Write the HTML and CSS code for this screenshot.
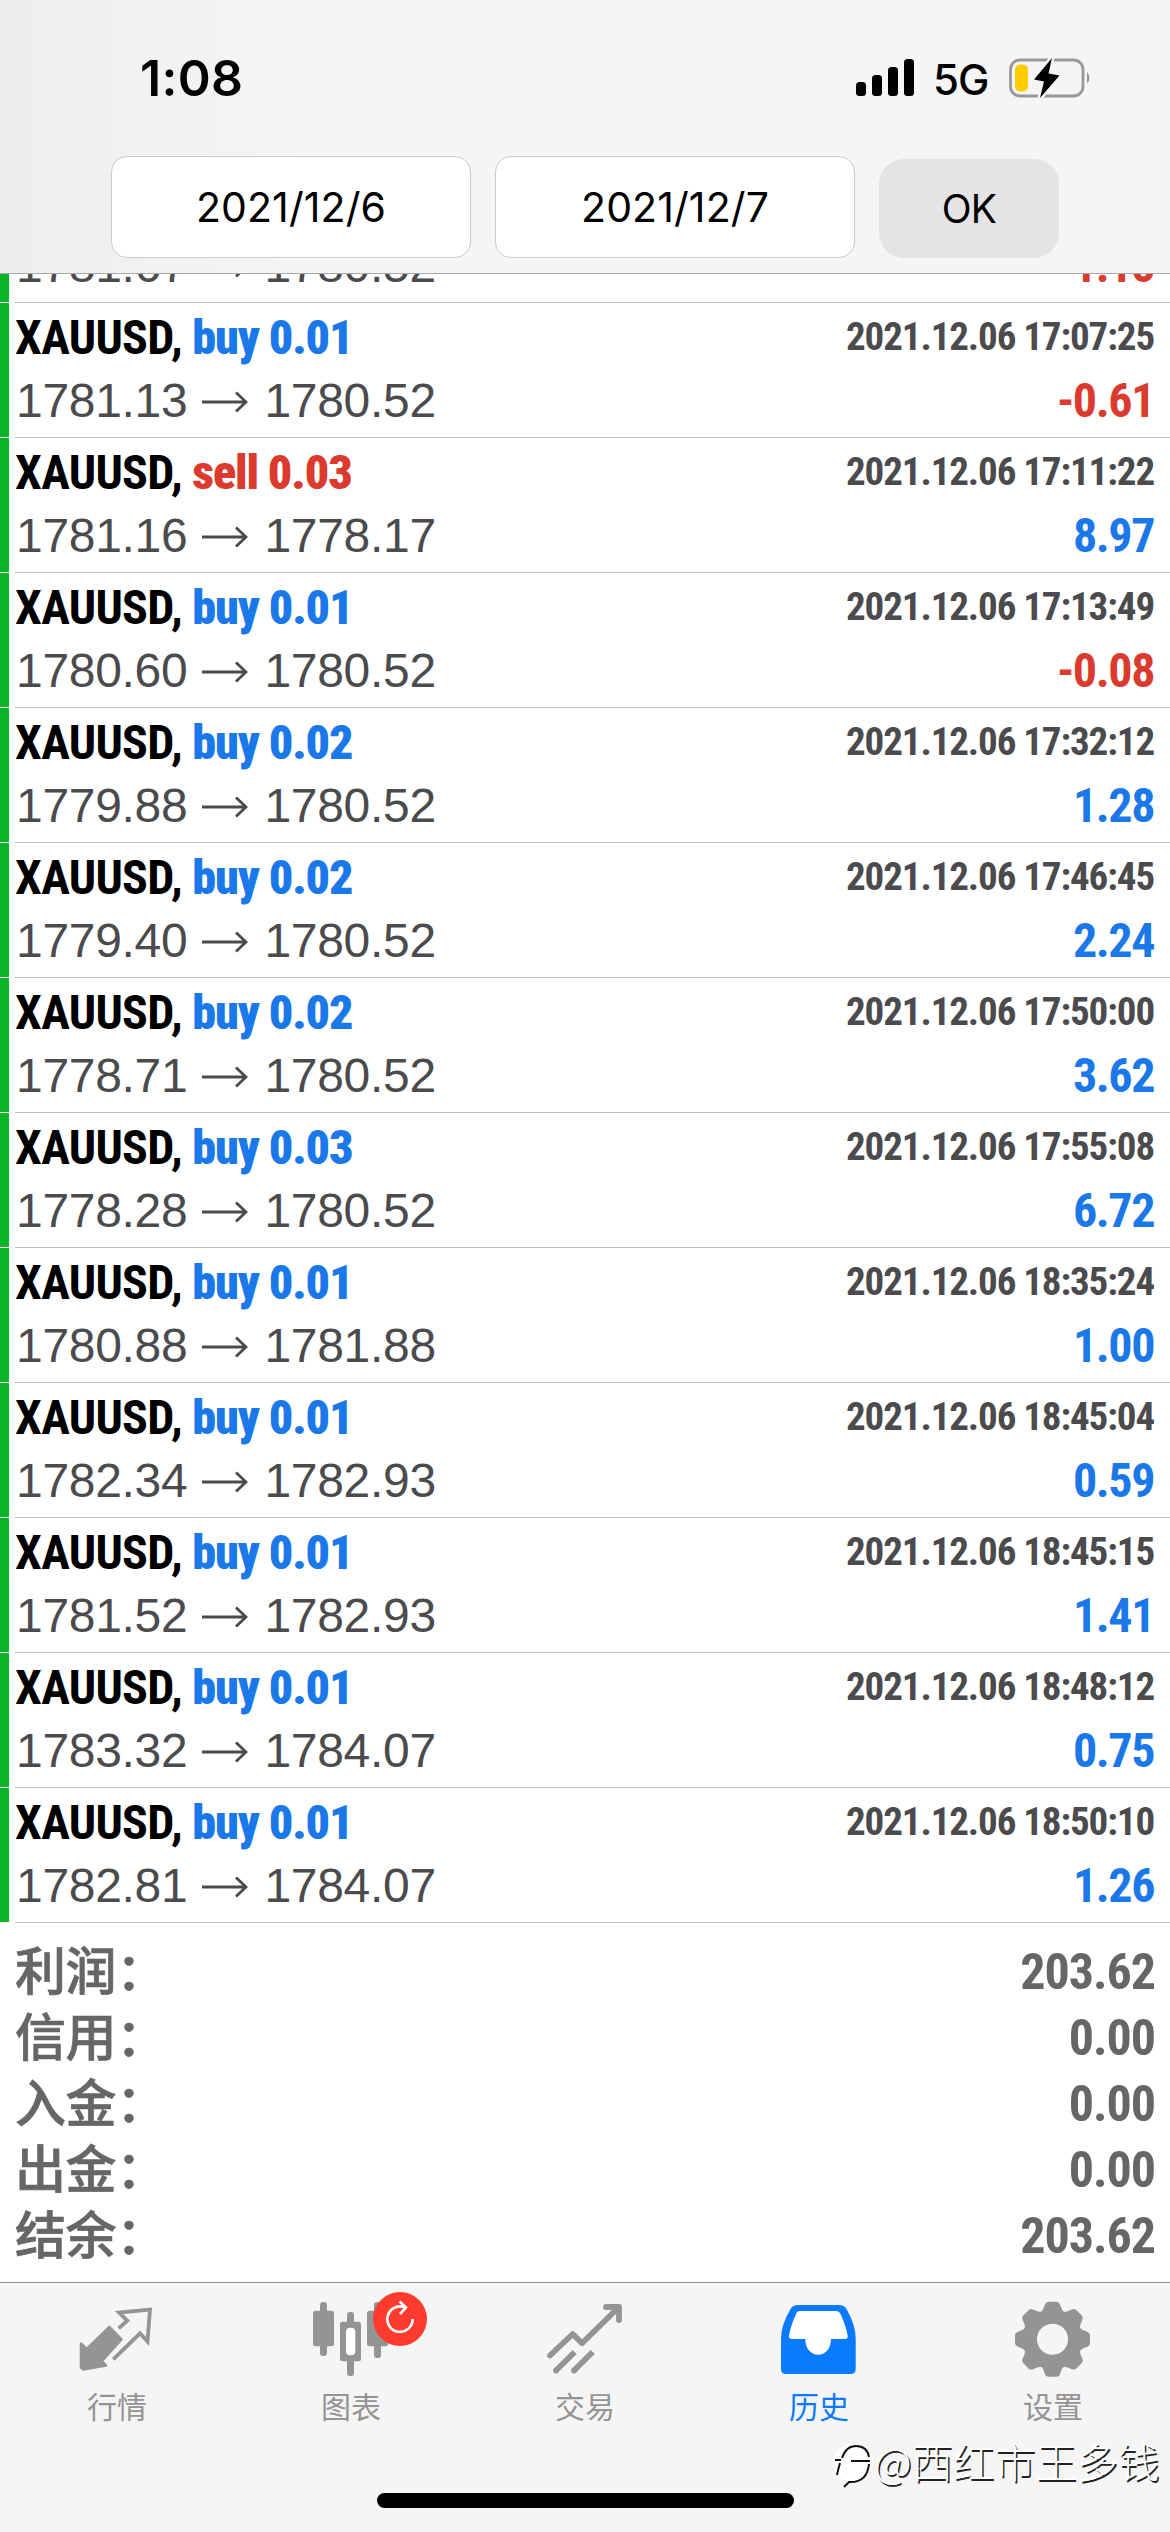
FILE: index.html
```html
<!DOCTYPE html>
<html lang="zh">
<head>
<meta charset="utf-8">
<title>历史</title>
<link rel="stylesheet" href="styles.css">
</head>
<body>
<svg width="0" height="0" class="defs">
  <symbol id="arrow" viewBox="0 0 46 22"><path d="M0 11H44M34 1.5L44 11L34 20.5" fill="none" stroke="currentColor" stroke-width="2.8"/></symbol>
</svg>
<div class="screen">
  <header class="header">
    <div class="status">
      <span class="clock">1:08</span>
      <svg class="signal" width="58" height="38" viewBox="0 0 58 38"><rect x="0" y="23" width="10" height="14" rx="3.5"/><rect x="16" y="16" width="10" height="21" rx="3.5"/><rect x="32" y="8" width="10" height="29" rx="3.5"/><rect x="48" y="0" width="10" height="37" rx="3.5"/></svg>
      <span class="network">5G</span>
      <svg class="battery" width="82" height="42" viewBox="0 0 82 42">
        <rect x="1.5" y="3" width="72.5" height="36" rx="9.5" fill="none" stroke="#98989a" stroke-width="2.8"/>
        <path d="M78 15q5 6 0 12z" fill="#98989a"/>
        <rect x="6" y="7.500" width="13" height="27" rx="5" fill="#fc0"/>
        <path d="M43 1L25 22.500L35 24.500L31 41L50.500 18.500L39.500 16.500z" fill="#000" stroke="#f5f5f5" stroke-width="5" paint-order="stroke" stroke-linejoin="round"/>
      </svg>
    </div>
    <div class="filters">
      <div class="date">2021/12/6</div>
      <div class="date">2021/12/7</div>
      <div class="ok">OK</div>
    </div>
  </header>

  <main class="history">
    <div class="list">
      <div class="row first"><i class="bar"></i><div class="body">
        <div class="line"><span class="price">1781.67<svg class="to"><use href="#arrow"/></svg>1780.52</span><span class="profit neg">-1.15</span></div></div></div>
      <div class="row"><i class="bar"></i><div class="body">
        <div class="line"><span class="sym">XAUUSD, <b class="buy">buy 0.01</b></span><span class="time">2021.12.06 17:07:25</span></div>
        <div class="line"><span class="price">1781.13<svg class="to"><use href="#arrow"/></svg>1780.52</span><span class="profit neg">-0.61</span></div></div></div>
      <div class="row"><i class="bar"></i><div class="body">
        <div class="line"><span class="sym">XAUUSD, <b class="sell">sell 0.03</b></span><span class="time">2021.12.06 17:11:22</span></div>
        <div class="line"><span class="price">1781.16<svg class="to"><use href="#arrow"/></svg>1778.17</span><span class="profit">8.97</span></div></div></div>
      <div class="row"><i class="bar"></i><div class="body">
        <div class="line"><span class="sym">XAUUSD, <b class="buy">buy 0.01</b></span><span class="time">2021.12.06 17:13:49</span></div>
        <div class="line"><span class="price">1780.60<svg class="to"><use href="#arrow"/></svg>1780.52</span><span class="profit neg">-0.08</span></div></div></div>
      <div class="row"><i class="bar"></i><div class="body">
        <div class="line"><span class="sym">XAUUSD, <b class="buy">buy 0.02</b></span><span class="time">2021.12.06 17:32:12</span></div>
        <div class="line"><span class="price">1779.88<svg class="to"><use href="#arrow"/></svg>1780.52</span><span class="profit">1.28</span></div></div></div>
      <div class="row"><i class="bar"></i><div class="body">
        <div class="line"><span class="sym">XAUUSD, <b class="buy">buy 0.02</b></span><span class="time">2021.12.06 17:46:45</span></div>
        <div class="line"><span class="price">1779.40<svg class="to"><use href="#arrow"/></svg>1780.52</span><span class="profit">2.24</span></div></div></div>
      <div class="row"><i class="bar"></i><div class="body">
        <div class="line"><span class="sym">XAUUSD, <b class="buy">buy 0.02</b></span><span class="time">2021.12.06 17:50:00</span></div>
        <div class="line"><span class="price">1778.71<svg class="to"><use href="#arrow"/></svg>1780.52</span><span class="profit">3.62</span></div></div></div>
      <div class="row"><i class="bar"></i><div class="body">
        <div class="line"><span class="sym">XAUUSD, <b class="buy">buy 0.03</b></span><span class="time">2021.12.06 17:55:08</span></div>
        <div class="line"><span class="price">1778.28<svg class="to"><use href="#arrow"/></svg>1780.52</span><span class="profit">6.72</span></div></div></div>
      <div class="row"><i class="bar"></i><div class="body">
        <div class="line"><span class="sym">XAUUSD, <b class="buy">buy 0.01</b></span><span class="time">2021.12.06 18:35:24</span></div>
        <div class="line"><span class="price">1780.88<svg class="to"><use href="#arrow"/></svg>1781.88</span><span class="profit">1.00</span></div></div></div>
      <div class="row"><i class="bar"></i><div class="body">
        <div class="line"><span class="sym">XAUUSD, <b class="buy">buy 0.01</b></span><span class="time">2021.12.06 18:45:04</span></div>
        <div class="line"><span class="price">1782.34<svg class="to"><use href="#arrow"/></svg>1782.93</span><span class="profit">0.59</span></div></div></div>
      <div class="row"><i class="bar"></i><div class="body">
        <div class="line"><span class="sym">XAUUSD, <b class="buy">buy 0.01</b></span><span class="time">2021.12.06 18:45:15</span></div>
        <div class="line"><span class="price">1781.52<svg class="to"><use href="#arrow"/></svg>1782.93</span><span class="profit">1.41</span></div></div></div>
      <div class="row"><i class="bar"></i><div class="body">
        <div class="line"><span class="sym">XAUUSD, <b class="buy">buy 0.01</b></span><span class="time">2021.12.06 18:48:12</span></div>
        <div class="line"><span class="price">1783.32<svg class="to"><use href="#arrow"/></svg>1784.07</span><span class="profit">0.75</span></div></div></div>
      <div class="row"><i class="bar"></i><div class="body">
        <div class="line"><span class="sym">XAUUSD, <b class="buy">buy 0.01</b></span><span class="time">2021.12.06 18:50:10</span></div>
        <div class="line"><span class="price">1782.81<svg class="to"><use href="#arrow"/></svg>1784.07</span><span class="profit">1.26</span></div></div></div>
    </div>
    <div class="summary">
      <div class="total"><span class="label">利润：</span><span class="value">203.62</span></div>
      <div class="total"><span class="label">信用：</span><span class="value">0.00</span></div>
      <div class="total"><span class="label">入金：</span><span class="value">0.00</span></div>
      <div class="total"><span class="label">出金：</span><span class="value">0.00</span></div>
      <div class="total"><span class="label">结余：</span><span class="value">203.62</span></div>
    </div>
  </main>

  <nav class="tabs">
    <div class="tab">
      <svg class="icon" viewBox="0 0 100 84"><path d="M42.300 31L54.500 43.300L35 65L39 69.500L16.300 73.500L14 71.500V47.500L19.700 53z" fill="currentColor" stroke="currentColor" stroke-width="2.500" stroke-linejoin="round"/><path d="M51.700 32.300L60.300 24.700L52 16.500L83 13.500L80.500 45.500L73 37.300L46.300 63.300" fill="none" stroke="currentColor" stroke-width="3.800"/></svg>
      <span>行情</span>
    </div>
    <div class="tab">
      <svg class="icon" viewBox="0 0 100 84"><g fill="currentColor"><rect x="12" y="14.700" width="21" height="35.500" rx="2.500"/><rect x="19" y="6" width="7" height="54" rx="3"/><rect x="39" y="25.700" width="21" height="39.500" rx="2.500"/><rect x="46" y="16" width="7" height="64" rx="3"/><rect x="66" y="14.700" width="21" height="35.500" rx="2.500"/><rect x="73" y="6" width="7" height="56" rx="3"/></g><rect x="45" y="31.700" width="9.300" height="27.600" rx="4" fill="#fff"/><circle cx="99" cy="23" r="27" fill="#ff3b30"/><path d="M111.700 23A12.700 12.700 0 1 1 104 11.500M98.500 5.500L105 11.500L99 18" fill="none" stroke="#fff" stroke-width="2.600"/></svg>
      <span>图表</span>
    </div>
    <div class="tab">
      <svg class="icon" viewBox="0 0 100 84"><g fill="none" stroke="currentColor" stroke-width="5.800" stroke-linejoin="round"><path d="M15 59.500L37.700 38L47 47.300L83 12M71 11H84V24" stroke-linecap="round"/><path d="M21 74.500L39.700 56M39 74.500L57.700 56"/></g><g fill="currentColor"><circle cx="21" cy="74.500" r="2.900"/><circle cx="39" cy="74.500" r="2.900"/></g></svg>
      <span>交易</span>
    </div>
    <div class="tab active">
      <svg class="icon" viewBox="0 0 100 84"><path d="M29 9H70Q75 9 77.500 13Q86.700 29 86.700 43V73Q86.700 78 81.700 78H17Q12 78 12 73V43Q12 29 21.500 13Q24 9 29 9Z" fill="currentColor"/><path d="M31 15H67Q70 15 71.500 18Q77 30 78.700 40Q79 43 76 43H62C62 52 57 58.700 49.200 58.700S36.300 52 36.300 43H23Q19.500 43 20 40Q21.500 30 27 18Q28 15 31 15Z" fill="#fff"/></svg>
      <span>历史</span>
    </div>
    <div class="tab">
      <svg class="icon" viewBox="0 0 100 84"><defs><path id="tooth" d="M-13 -25Q-10 -28 -8.500 -32Q-7 -37.500 -4 -37.500H4Q7 -37.500 8.500 -32Q10 -28 13 -25Z"/></defs><g transform="translate(49.500 43.300)" fill="currentColor"><circle r="22.800" fill="none" stroke="currentColor" stroke-width="14.500"/><use href="#tooth"/><use href="#tooth" transform="rotate(45)"/><use href="#tooth" transform="rotate(90)"/><use href="#tooth" transform="rotate(135)"/><use href="#tooth" transform="rotate(180)"/><use href="#tooth" transform="rotate(225)"/><use href="#tooth" transform="rotate(270)"/><use href="#tooth" transform="rotate(315)"/></g></svg>
      <span>设置</span>
    </div>
    <div class="home"></div>
    <div class="watermark">
      <svg width="42" height="50" viewBox="0 0 42 50"><circle cx="20" cy="22" r="19" fill="#fff"/><path d="M3 19H9M5 34Q6 29 8 22M10 17Q14 5 24 5Q35 5 37 16M19 20H38M37 23Q35 42 17 41L12 46" fill="none" stroke="#111" stroke-width="2"/></svg>
      <span>@西红市王多钱</span>
    </div>
  </nav>
</div>
</body>
</html>
```
FILE: styles.css
```css
* { box-sizing: border-box; }
body { margin: 0; background: #fff; }
.defs { position: absolute; }
.screen {
  width: 1170px;
  height: 2532px;
  display: flex;
  flex-direction: column;
  overflow: hidden;
  font-family: "Liberation Sans", "Noto Sans CJK SC", sans-serif;
}

/* header */
.header {
  height: 274px;
  flex: none;
  border-bottom: 1px solid #a9a9ab;
  background: linear-gradient(90deg, #eceeeb 0, #f0f0f1 90px, #f5f5f6 300px, #f5f5f6 100%);
  font-family: Inter, sans-serif;
  color: #000;
}
.status {
  height: 156px;
  display: flex;
  align-items: center;
  padding: 0 79px 0 140px;
}
.clock { font-size: 50px; font-weight: 600; flex: 1; line-height: 156px; letter-spacing: 0.3px; }
.network { font-size: 42px; width: 76px; margin-left: 19px; letter-spacing: -1px; padding-top: 2px; font-weight: 450; }
.filters { display: flex; align-items: flex-end; padding-left: 111px; }
.date {
  width: 360px;
  height: 102px;
  margin-right: 24px;
  border: 1px solid #cbcbcd;
  border-radius: 16px;
  background: #fff;
  font-size: 41px;
  line-height: 101px;
  letter-spacing: 0.1px;
  text-align: center;
}
.ok {
  width: 180px;
  height: 99px;
  border-radius: 25px;
  background: #e4e4e6;
  font-size: 39px;
  line-height: 99px;
  letter-spacing: -0.7px;
  text-align: center;
}

/* deals */
.history { flex: 1; }
.row { display: flex; height: 135px; }
.bar { width: 9px; height: 134px; background: #09b429; }
.body {
  flex: 1;
  margin-left: 6px;
  padding: 4px 16px 0 1px;
  border-bottom: 1px solid #c3c3c5;
}
.row.first { height: 29px; overflow: hidden; }
.row.first .bar { height: 28px; }
.row.first .body { display: flex; flex-direction: column; justify-content: flex-end; padding: 0 16px 6px 1px; }
.row.first .line { flex: none; }
.line { display: flex; justify-content: space-between; height: 62px; line-height: 62px; white-space: nowrap; }
.sym, .time, .profit, .value { font-family: "Roboto Condensed", "Liberation Sans", sans-serif; font-weight: 700; }
.sym { font-size: 48px; letter-spacing: -0.7px; margin-left: -1px; color: #000; }
.buy, .sell { letter-spacing: -1.1px; }
.buy { color: #1a78e8; }
.sell { color: #db3b2f; }
.time { font-size: 39px; line-height: 60px; letter-spacing: -1.1px; color: #4b4b4e; }
.price { font-size: 48px; line-height: 64px; height: 64px; color: #4b4b4e; display: flex; align-items: center; letter-spacing: -0.3px; }
.to { width: 46px; height: 22px; margin: 2px 16px 0 15px; }
.profit { font-size: 48px; line-height: 64px; letter-spacing: -1.4px; color: #1a78e8; }
.profit.neg { color: #db3b2f; }

/* totals */
.summary { padding: 16px 15px 0; color: #666; }
.total { display: flex; justify-content: space-between; height: 66px; }
.label {
  font-family: "Noto Sans CJK SC", sans-serif;
  font-weight: 500;
  -webkit-text-stroke: 0.7px #666;
  font-size: 51px;
  letter-spacing: -0.4px;
  line-height: 59px;
}
.value { font-size: 50px; line-height: 66px; letter-spacing: -1px; }

/* tab bar */
.tabs {
  position: relative;
  flex: none;
  height: 250px;
  display: flex;
  border-top: 1px solid #8e8e90;
  background: #f5f5f5;
}
.tab {
  flex: 1;
  display: flex;
  flex-direction: column;
  align-items: center;
  padding-top: 13px;
  color: #949494;
  font-family: "Noto Sans CJK SC", sans-serif;
  font-size: 30px;
  line-height: 50px;
}
.tab.active { color: #0a7aff; }
.icon { width: 100px; height: 84px; overflow: visible; }
.home {
  position: absolute;
  left: 377px;
  top: 210px;
  width: 417px;
  height: 15px;
  border-radius: 8px;
  background: #000;
}
.watermark {
  position: absolute;
  left: 832px;
  top: 158px;
  display: flex;
  align-items: center;
  font: 300 41.300px/44px "Noto Sans CJK SC", sans-serif;
  color: #fff;
  text-shadow: 1.5px 1.5px 0 #222;
  white-space: nowrap;
}
.watermark span { margin-top: -12px; }
```
